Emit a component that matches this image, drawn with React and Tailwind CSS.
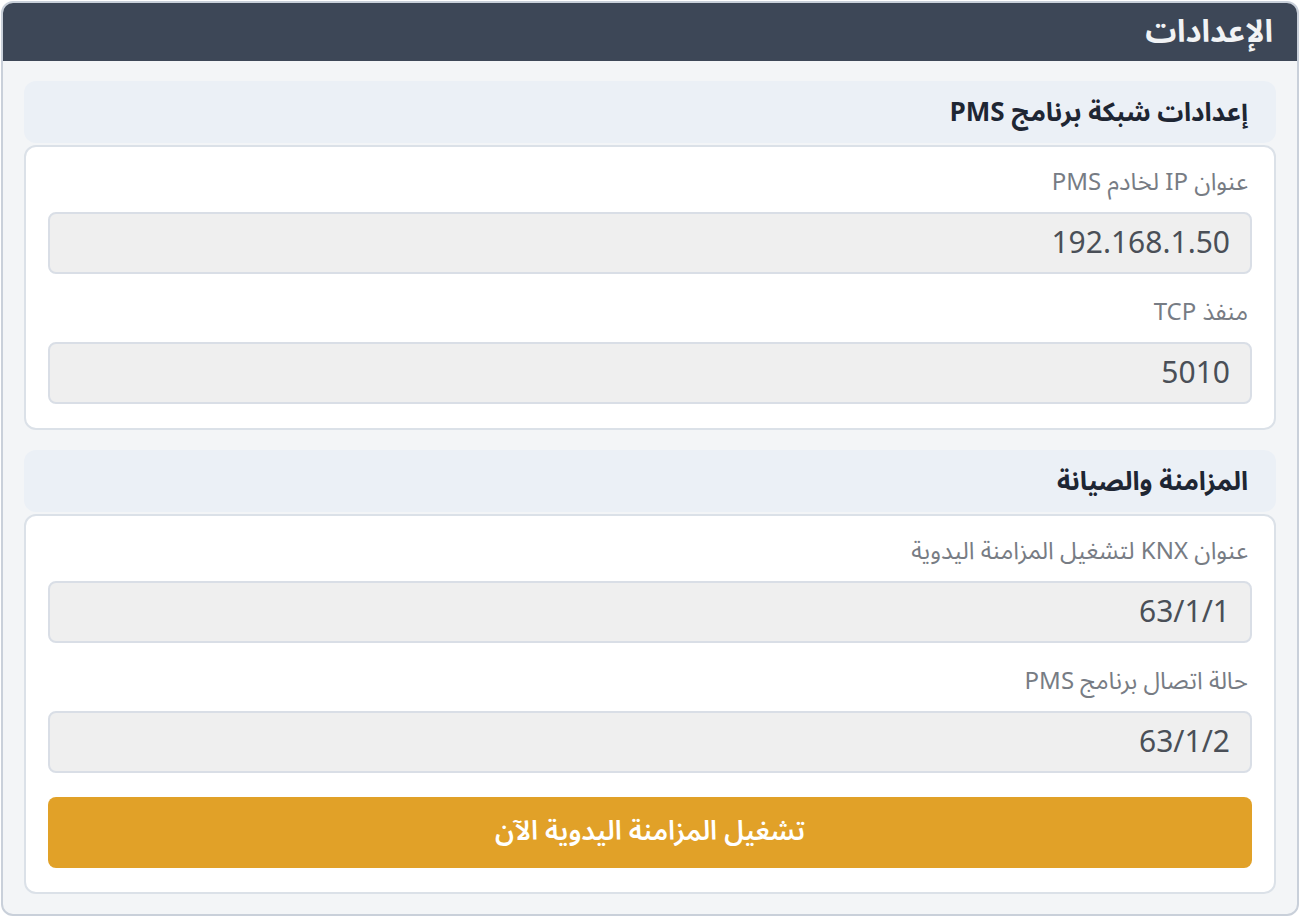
import React from 'react';

const Field = ({ label, value }) => (
  <div className="flex flex-col">
    <label className="px-1 text-[24px] leading-[34px] text-[#777c84]">{label}</label>
    <div className="mt-3 h-[62px] flex items-center px-5 rounded-lg bg-[#efefef] border-2 border-[#d9dee6] text-[30px] text-[#4a4f57]">
      <span dir="ltr">{value}</span>
    </div>
  </div>
);

const Section = ({ title, children }) => (
  <div className="flex flex-col gap-[2px]">
    <div className="h-[62px] flex items-center px-7 rounded-xl bg-[#ebf0f6]">
      <h2 className="text-[26px] font-bold text-[#1e2633]">{title}</h2>
    </div>
    <div className="bg-white border-2 border-[#dbe1e8] rounded-xl px-[22px] pt-[19px] pb-[24px] flex flex-col gap-[22px]">
      {children}
    </div>
  </div>
);

export default function App() {
  return (
    <div
      dir="rtl"
      className="w-[1300px] h-[917px] p-px bg-white"
      style={{ fontFamily: '"Noto Sans Arabic", "DejaVu Sans", "Noto Sans", sans-serif' }}
    >
      <div className="h-full rounded-xl border-2 border-[#c9d0da] bg-[#f3f5f7] flex flex-col">
        <header className="h-[58px] shrink-0 rounded-t-[10px] bg-[#3d4757] flex items-center px-6">
          <h1 className="text-[31px] font-bold text-[#f1f3f5]">الإعدادات</h1>
        </header>
        <main className="flex-1 px-[21px] pt-5 pb-5 flex flex-col gap-[20px]">
          <Section title="إعدادات شبكة برنامج PMS">
            <Field label="عنوان IP لخادم PMS" value="192.168.1.50" />
            <Field label="منفذ TCP" value="5010" />
          </Section>
          <Section title="المزامنة والصيانة">
            <Field label="عنوان KNX لتشغيل المزامنة اليدوية" value="63/1/1" />
            <Field label="حالة اتصال برنامج PMS" value="63/1/2" />
            <button className="mt-[2px] h-[71px] rounded-lg bg-[#e1a128] text-white text-[27px] font-semibold">
              تشغيل المزامنة اليدوية الآن
            </button>
          </Section>
        </main>
      </div>
    </div>
  );
}
